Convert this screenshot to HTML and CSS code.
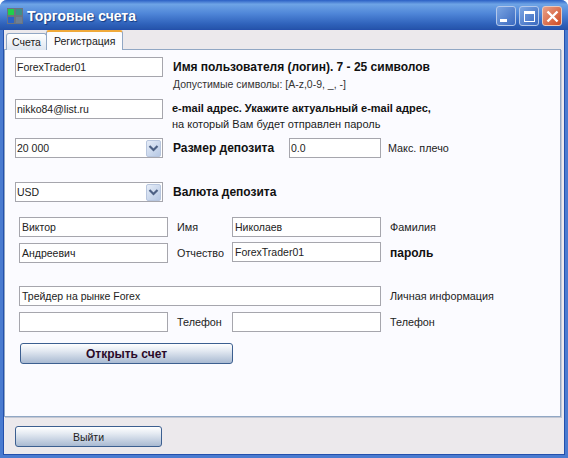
FILE: index.html
```html
<!DOCTYPE html>
<html lang="ru">
<head>
  <meta charset="UTF-8" />
  <title>Торговые счета</title>
  <link rel="stylesheet" href="styles.css">
</head>
<body>
  <div class="window">
    <div class="titlebar">
      <svg class="app-icon" width="16" height="16" viewBox="0 0 16 16">
        <rect x="0" y="0" width="16" height="16" fill="#6b7480"/>
        <rect x="1" y="1" width="6" height="6" fill="#1fd04a"/>
        <rect x="9" y="1" width="6" height="6" fill="#3f8f86"/>
        <rect x="1" y="9" width="6" height="6" fill="#2a63c8"/>
        <rect x="9" y="9" width="6" height="6" fill="#6d7f95"/>
      </svg>
      <span class="title">Торговые счета</span>
      <div class="controls">
        <div class="ctl"><span class="ctl-min"></span></div>
        <div class="ctl"><span class="ctl-max"></span></div>
        <div class="ctl ctl-close">
          <svg width="13" height="13" viewBox="0 0 13 13"><path d="M1.5 1.5l10 10M11.5 1.5l-10 10" stroke="#fff" stroke-width="2.4" fill="none"/></svg>
        </div>
      </div>
    </div>
    <div class="body">
      <div class="tabs">
        <div class="tab">Счета</div>
        <div class="tab tab-active">Регистрация</div>
      </div>
      <div class="panel">
        <div class="row row-login">
          <div class="field wide">ForexTrader01</div>
          <div class="notes">
            <div class="bold">Имя пользователя (логин). 7 - 25 символов</div>
            <div class="sub">Допустимые символы: [A-z,0-9, _, -]</div>
          </div>
        </div>
        <div class="row row-mail">
          <div class="field wide">nikko84@list.ru</div>
          <div class="notes">
            <div class="bold mail">e-mail адрес. Укажите актуальный e-mail адрес,</div>
            <div class="sub dark">на который Вам будет отправлен пароль</div>
          </div>
        </div>
        <div class="row row-deposit">
          <div class="field wide combo">20 000<span class="arrow"><svg width="11" height="7" viewBox="0 0 11 7"><path d="M1.5 1l4 4 4-4" stroke="#4d6185" stroke-width="2.2" fill="none"/></svg></span></div>
          <div class="bold deposit-label">Размер депозита</div>
          <div class="field leverage">0.0</div>
          <div class="text">Макс. плечо</div>
        </div>
        <div class="row row-currency">
          <div class="field wide combo">USD<span class="arrow"><svg width="11" height="7" viewBox="0 0 11 7"><path d="M1.5 1l4 4 4-4" stroke="#4d6185" stroke-width="2.2" fill="none"/></svg></span></div>
          <div class="bold deposit-label">Валюта депозита</div>
        </div>
        <div class="person">
          <div class="field">Виктор</div>
          <div class="text">Имя</div>
          <div class="field">Николаев</div>
          <div class="text">Фамилия</div>
          <div class="field">Андреевич</div>
          <div class="text">Отчество</div>
          <div class="field pass">ForexTrader01</div>
          <div class="bold">пароль</div>
          <div class="field span3 gap-top">Трейдер на рынке Forex</div>
          <div class="text gap-top">Личная информация</div>
          <div class="field"></div>
          <div class="text">Телефон</div>
          <div class="field"></div>
          <div class="text">Телефон</div>
        </div>
        <button class="btn btn-open">Открыть счет</button>
      </div>
      <div class="footer">
        <button class="btn btn-exit">Выйти</button>
      </div>
    </div>
  </div>
</body>
</html>
```

FILE: styles.css
```css
html, body {
  margin: 0;
  padding: 0;
  background: #fff;
}

body {
  font-family: "Liberation Sans", Arial, sans-serif;
  font-size: 11px;
  color: #1c1c1c;
}

.window {
  width: 568px;
  height: 458px;
  box-sizing: border-box;
  border-radius: 7px 7px 0 0;
  background: #4a7bd0;
  overflow: hidden;
  display: flex;
  flex-direction: column;
}

.titlebar {
  height: 30px;
  flex: none;
  display: flex;
  align-items: center;
  padding: 2px 6px 0 7px;
  box-sizing: border-box;
  background: linear-gradient(180deg, #2a5fc4 0, #6ea4e6 14%, #4f86d8 45%, #2f62bb 80%, #2452a8 100%);
}

.app-icon {
  margin-right: 4px;
}

.title {
  font-size: 14px;
  font-weight: bold;
  color: #fff;
  text-shadow: 1px 1px 1px #123a80;
}

.controls {
  margin-left: auto;
  display: flex;
  gap: 3px;
}

.ctl {
  width: 20px;
  height: 20px;
  box-sizing: border-box;
  border: 1px solid #b4c8ea;
  border-radius: 3px;
  background: linear-gradient(135deg, #7ba5e2, #3a69c0);
  position: relative;
  display: flex;
  align-items: center;
  justify-content: center;
}

.ctl-min {
  position: absolute;
  left: 3px;
  bottom: 3px;
  width: 7px;
  height: 3px;
  background: #fff;
}

.ctl-max {
  width: 11px;
  height: 11px;
  box-sizing: border-box;
  border: 1px solid #fff;
  border-top-width: 3px;
}

.ctl-close {
  background: linear-gradient(135deg, #e8a088, #cf4a22);
  border-color: #e8c8bc;
}

.body {
  flex: 1;
  margin: 0 4px 4px;
  background: #ece9ec;
  box-shadow: 0 0 0 1px #2450ac;
  display: flex;
  flex-direction: column;
  min-height: 0;
}

.tabs {
  height: 19px;
  flex: none;
  display: flex;
  align-items: flex-end;
  padding-left: 2px;
  position: relative;
  z-index: 1;
  margin-bottom: -1px;
  padding-top: 1px;
}

.tab {
  height: 17px;
  box-sizing: border-box;
  padding: 2px 5px 0 5px;
  border: 1px solid #91a7c4;
  border-bottom: 0;
  border-radius: 3px 3px 0 0;
  background: linear-gradient(180deg, #fff, #dfe6f0);
  color: #222;
  font-size: 10.5px;
}

.tab-active {
  height: 20px;
  padding: 3px 7px 0 7px;
  margin-left: -1px;
  background: #fcfcfe;
  border-top: 2px solid #f0a93a;
}

.panel {
  flex: 1;
  background: #fbfbff;
  border: 1px solid #91a7c4;
  box-shadow: 1px 1px 0 #c4c8d4;
  margin-right: 3px;
  padding: 7px 0 0 10px;
  min-height: 0;
}

.row {
  display: flex;
}

.row-login {
  height: 42px;
}

.row-mail {
  height: 39px;
}

.row-deposit {
  height: 44px;
  align-items: flex-start;
}

.row-currency {
  height: 35px;
  align-items: flex-start;
}

.notes {
  margin-left: 10px;
}

.row-mail .notes {
  margin-left: 9px;
  margin-top: 3px;
}

.row-login .notes {
  margin-top: 4px;
}

.bold {
  font-size: 12px;
  font-weight: bold;
  color: #111;
  line-height: 13px;
}

.mail {
  font-size: 11px;
}

.sub {
  color: #333;
  line-height: 13px;
  margin-top: 4px;
  font-size: 10.5px;
}

.sub.dark {
  margin-top: 3px;
  font-size: 11px;
  color: #1c1c1c;
}

.text {
  font-size: 10.8px;
  color: #222;
  line-height: 20px;
}

.field {
  height: 20px;
  box-sizing: border-box;
  border: 1px solid #a6a6ad;
  background: #fff;
  padding-left: 1px;
  line-height: 18px;
  font-size: 10.5px;
  color: #222;
}

.wide {
  width: 148px;
  flex: none;
}

.combo {
  position: relative;
}

.arrow {
  position: absolute;
  right: 1px;
  top: 1px;
  width: 15px;
  height: 17px;
  box-sizing: border-box;
  border: 1px solid #b8c6de;
  border-radius: 2px;
  background: linear-gradient(135deg, #e6edf8, #b6c8e4);
  display: flex;
  align-items: center;
  justify-content: center;
}

.deposit-label {
  margin-left: 10px;
  width: 116px;
  flex: none;
  line-height: 20px;
}

.leverage {
  width: 92px;
  margin-right: 7px;
}

.person {
  display: grid;
  grid-template-columns: 149px 46px 149px auto;
  column-gap: 9px;
  row-gap: 6px;
  margin-left: 4px;
  align-items: center;
}

.person .field {
  padding-left: 2px;
}

.person .pass {
  align-self: start;
  margin-top: -1px;
}

.span3 {
  grid-column: 1 / span 3;
}

.person .gap-top {
  margin-top: 17px;
}

.btn {
  display: block;
  padding: 0;
  font-family: inherit;
  border: 1px solid #3c5f90;
  border-radius: 3px;
  background: linear-gradient(180deg, #fff 0, #e4eaf2 35%, #a9bad2 100%);
  color: #222;
  font-size: 10.5px;
}

.btn-open {
  width: 213px;
  height: 21px;
  margin: 11px 0 0 5px;
  font-weight: bold;
  font-size: 12px;
  color: #2a0a2a;
}

.footer {
  flex: none;
  height: 37px;
  padding: 9px 0 0 11px;
  box-sizing: border-box;
}

.btn-exit {
  width: 147px;
  height: 21px;
}
```
